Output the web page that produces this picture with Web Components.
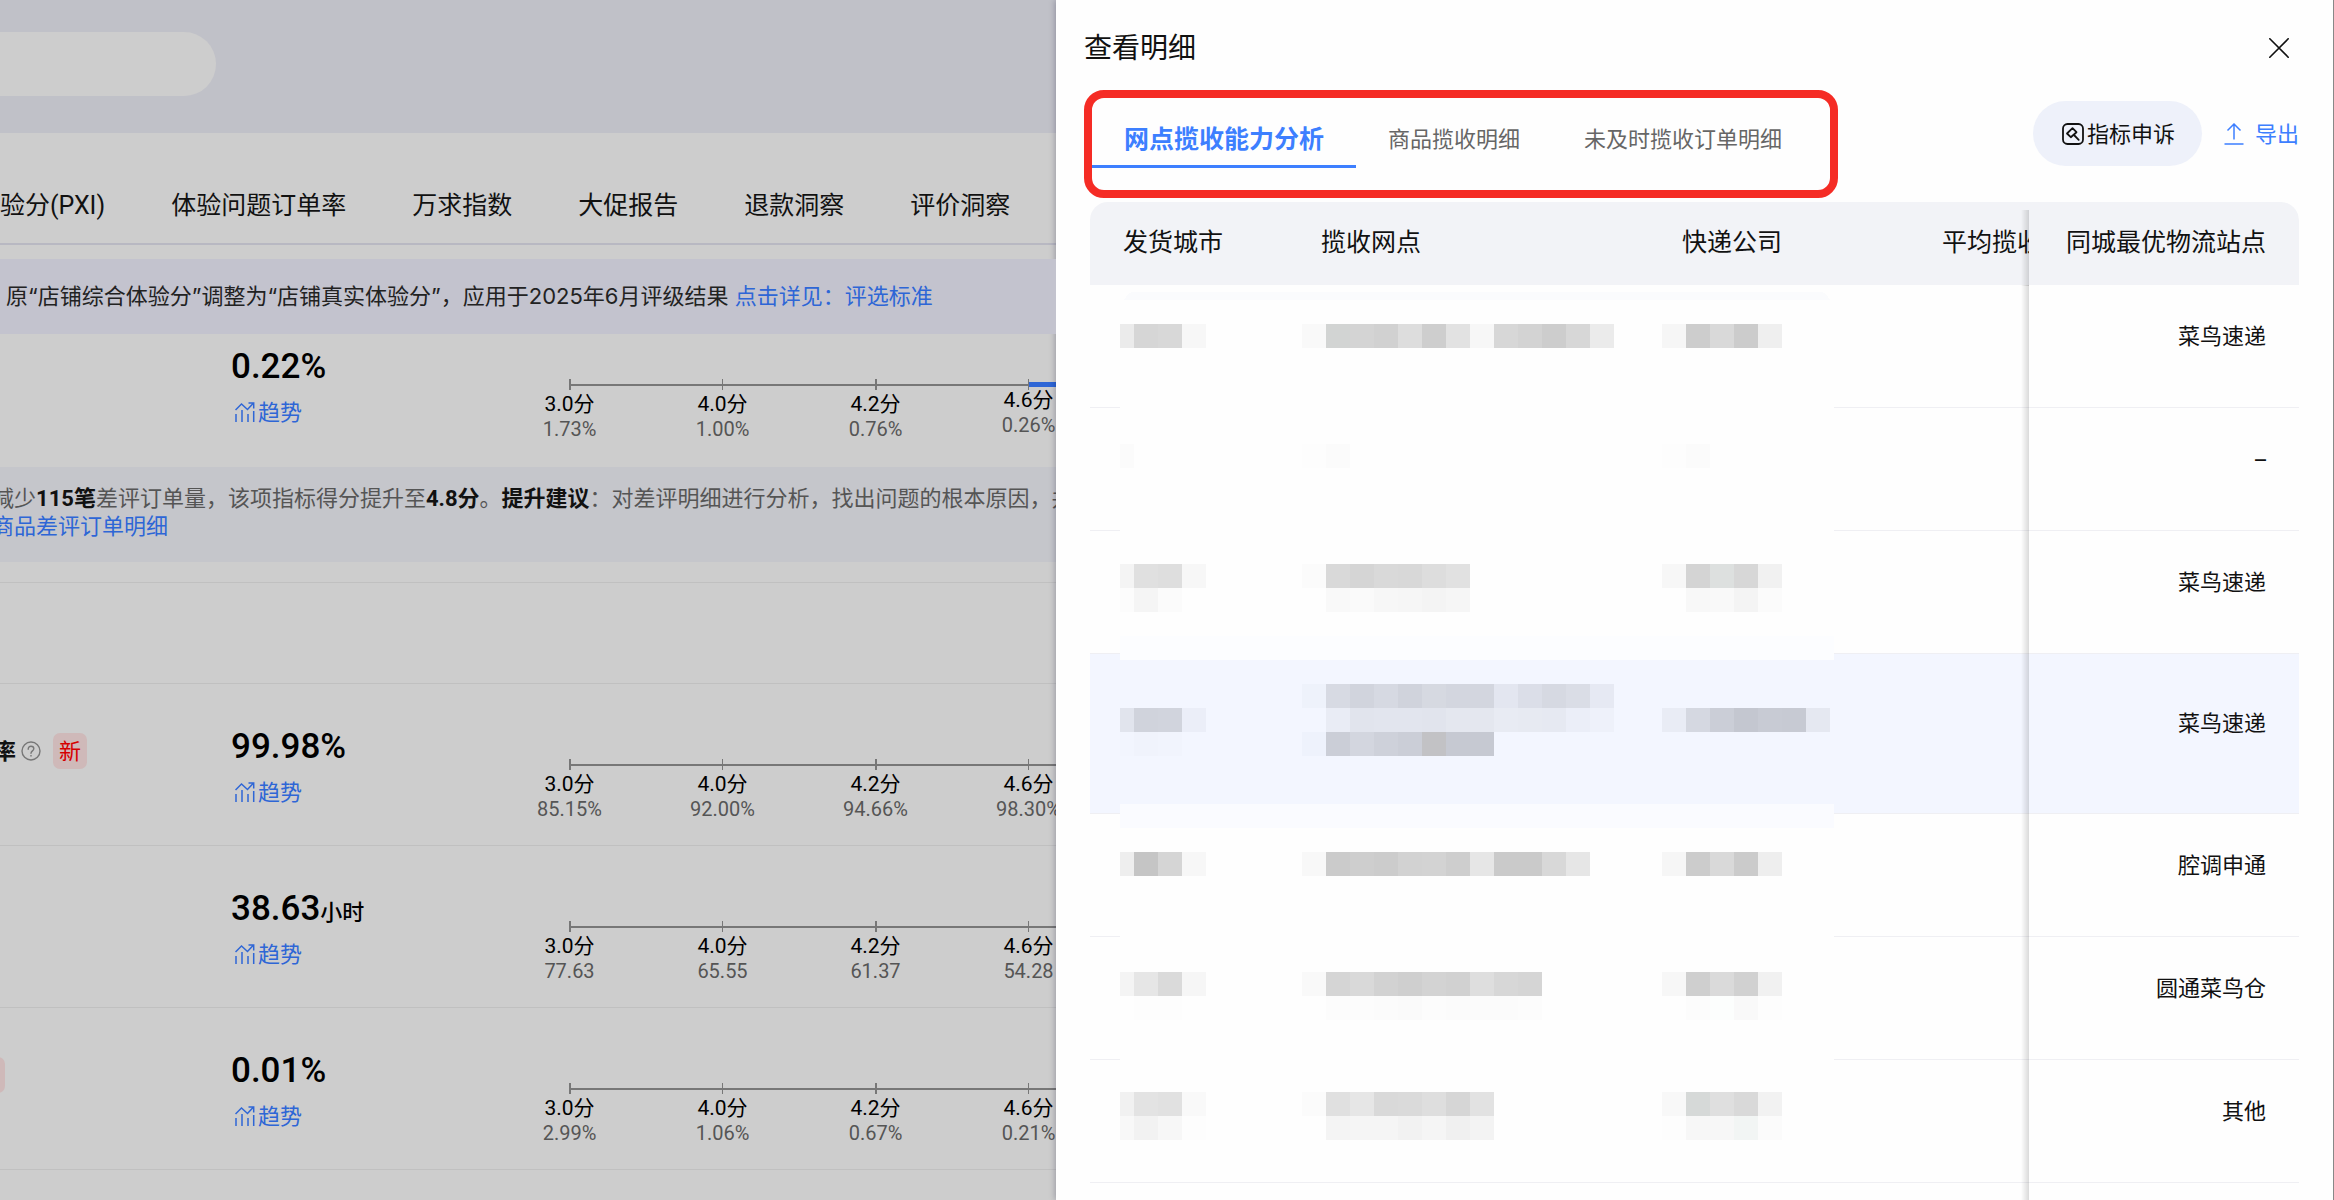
<!DOCTYPE html>
<html lang="zh-CN">
<head>
<meta charset="utf-8">
<title>查看明细</title>
<style>
  html, body {
    height: 100%;
    margin: 0;
  }
  body {
    font-family: Inter, "Noto Sans CJK SC", sans-serif;
    font-size: 22px;
    line-height: 30px;
    color: #111;
    background: #cdcdcd;
    overflow: hidden;
  }
</style>
</head>
<body>
<app-shell>
  <experience-page></experience-page>
  <detail-drawer slot="drawer" heading="查看明细">
    <drawer-tabs slot="tabs"></drawer-tabs>
    <drawer-actions slot="actions"></drawer-actions>
    <carrier-table></carrier-table>
  </detail-drawer>
</app-shell>

<script>
(function() {
  // Base class - clones the static template of the subclass into the shadow root
  class BaseElement extends HTMLElement {
    constructor() {
      super()
      const template = document.createElement('template')
      template.innerHTML = this.constructor.markup
      this._root = this.attachShadow({ mode: 'open' })
      this._root.appendChild(template.content.cloneNode(true))
    }
  }

  // ---------
  // Page on the left, drawer on the right
  class AppShell extends BaseElement {
    static get markup() {
      return `
        <style>
          :host {
            display: grid;
            grid-template-columns: minmax(0, 1056fr) minmax(0, 1278fr);
            grid-template-rows: minmax(0, 1fr);
            height: 100vh;
            overflow: hidden;
          }
          main { min-width: 0; overflow: hidden; }
        </style>
        <main><slot></slot></main>
        <slot name="drawer"></slot>
      `
    }
  }

  // ---------
  // The dimmed page behind the drawer
  class ExperiencePage extends BaseElement {
    static get markup() {
      return `
        <style>
          :host { display: block; background: #cdcdcd; }
          header {
            display: flex;
            padding: 32px 0 37px;
            background: #c0c1c8;
          }
          input {
            width: 248px;
            height: 64px;
            margin: 0 0 0 -32px;
            box-sizing: border-box;
            border: 0;
            border-radius: 32px;
            background: #cdcdcd;
          }
          nav {
            display: flex;
            gap: 66px;
            padding: 56px 0 20px;
            border-bottom: 2px solid #b8b8c2;
            font: 25px/34px Roboto, "Noto Sans CJK SC", sans-serif;
            white-space: nowrap;
          }
          nav a { color: #111; text-decoration: none; }
          .notice {
            position: relative;
            z-index: 1;
            margin-top: 14px;
            padding: 22px 0 23px 6px;
            background: #c3c3ce;
            color: #222;
            white-space: nowrap;
          }
          .link { color: #2e66d6; text-decoration: none; }
          .list { margin-top: -30px; }
          .tip {
            padding: 18px 0 21px;
            background: #c5c6cb;
            color: #555;
            font: 22px/28px Roboto, "Noto Sans CJK SC", sans-serif;
            white-space: nowrap;
          }
          .tip p { margin: 0 0 0 -8px; }
          .tip b { color: #111; }
          .group {
            height: 100px;
            margin-top: 20px;
            border: solid #c0c0c0;
            border-width: 1px 0;
          }
        </style>
        <header><input type="text" aria-label="搜索"></header>
        <nav>
          <a href="#pxi">验分(PXI)</a>
          <a href="#orders">体验问题订单率</a>
          <a href="#wanqiu">万求指数</a>
          <a href="#promo">大促报告</a>
          <a href="#refund">退款洞察</a>
          <a href="#review">评价洞察</a>
        </nav>
        <div class="notice">原“店铺综合体验分”调整为“店铺真实体验分”，应用于2025年6月评级结果 <a class="link" href="#rules">点击详见：评选标准</a></div>
        <div class="list">
          <metric-row value="0.22%" active="3" scores="1.73%,1.00%,0.76%,0.26%"></metric-row>
          <div class="tip">
            <p>减少<b>115笔</b>差评订单量，该项指标得分提升至<b>4.8分</b>。<b>提升建议</b>：对差评明细进行分析，找出问题的根本原因，并制</p>
            <p><a class="link" href="#bad">商品差评订单明细</a></p>
          </div>
          <div class="group"></div>
          <metric-row value="99.98%" scores="85.15%,92.00%,94.66%,98.30%">
            <metric-name slot="name">率</metric-name>
          </metric-row>
          <metric-row value="38.63" unit="小时" scores="77.63,65.55,61.37,54.28"></metric-row>
          <metric-row value="0.01%" scores="2.99%,1.06%,0.67%,0.21%">
            <new-tag slot="name" class="edge"></new-tag>
          </metric-row>
        </div>
      `
    }
  }

  // ---------
  class NewTag extends BaseElement {
    static get markup() {
      return `
        <style>
          :host {
            display: inline-block;
            padding: 3px 6px;
            border-radius: 7px;
            background: #cfb9b9;
            color: #d60000;
          }
          /* the tag is scrolled out, only its right edge stays */
          :host(.edge) { margin-left: -29px; }
        </style>
        <span>新</span>
      `
    }
    connectedCallback() {
      if (this.classList.contains('edge')) {
        this._root.querySelector('span').style.visibility = 'hidden'
      }
    }
  }

  class MetricName extends BaseElement {
    static get markup() {
      return `
        <style>
          :host { display: flex; align-items: center; margin-left: -6px; font-weight: 700; }
          svg { margin: 0 12px 0 5px; }
          new-tag { font-weight: 400; }
        </style>
        <slot></slot>
        <svg width="20" height="20" viewBox="0 0 20 20" fill="none" stroke="#777" stroke-width="1.4">
          <circle cx="10" cy="10" r="9"/>
          <path d="M7.2 8.2C7.2 6.4 8.4 5.3 10 5.3s2.8 1 2.8 2.5c0 2-2.8 2.2-2.8 4.4" stroke-linecap="round"/>
          <path d="M10 14v1.5"/>
        </svg>
        <new-tag></new-tag>
      `
    }
  }

  // ---------
  // One metric: name, current value with the trend link, score axis
  class MetricRow extends BaseElement {
    static get markup() {
      return `
        <style>
          :host {
            display: grid;
            grid-template-columns: 231px 262px 1fr;
            height: 162px;
            border-bottom: 1px solid #c0c0c0;
            box-sizing: border-box;
          }
          .name { padding-top: 49px; }
          .current { padding-top: 40px; }
          .value {
            font: 500 35px/46px Roboto, "Noto Sans CJK SC", sans-serif;
            color: #000;
          }
          .value small { font-size: 22px; line-height: 0; }
          a {
            display: inline-flex;
            align-items: center;
            gap: 3px;
            margin: 7px 0 0 4px;
            color: #2e66d6;
            text-decoration: none;
          }
          score-axis { margin-top: 75px; }
          :host([active]) { height: 163px; border-bottom: 0; }
        </style>
        <div class="name"><slot name="name"></slot></div>
        <div class="current">
          <div class="value"></div>
          <a href="#trend">
            <svg width="20" height="22" viewBox="0 0 20 22" fill="none" stroke="currentColor" stroke-width="1.5">
              <path d="M.5 9 6.5 3l6 5.500L18.500 2M13.500 2h5.200v5.500"/>
              <path d="M1 13v8M7 9v12M13 13v8M18.700 10v11"/>
            </svg>趋势</a>
        </div>
        <score-axis></score-axis>
      `
    }
    connectedCallback() {
      const value = this._root.querySelector('.value')
      value.textContent = this.getAttribute('value')
      if (this.hasAttribute('unit')) {
        const unit = document.createElement('small')
        unit.textContent = this.getAttribute('unit')
        value.appendChild(unit)
      }
      this._root.querySelector('score-axis').render(
        this.getAttribute('scores').split(','),
        Number(this.getAttribute('active') || -1)
      )
    }
  }

  class ScoreAxis extends BaseElement {
    static get markup() {
      return `
        <style>
          :host {
            display: grid;
            grid-template-columns: repeat(4, 153px);
            align-items: start;
            font: 20px/25px Roboto, "Noto Sans CJK SC", sans-serif;
            text-align: center;
            color: #555;
          }
          .rail { display: flex; align-items: center; height: 11px; margin-bottom: 2px; }
          .rail i { flex: 1; height: 2px; background: #777; }
          .rail b { width: 2px; height: 11px; background: #777; }
          .point:nth-of-type(even) .rail b { width: 1px; }
          .point:first-of-type .rail i:first-child { background: none; }
          .active .rail { margin-bottom: -2px; }
          .active .rail i:last-child { height: 5px; background: #2e66d6; }
          .grade { color: #000; font-size: 21px; }
        </style>
      `
    }
    render(scores, active) {
      const grades = ['3.0分', '4.0分', '4.2分', '4.6分']
      scores.forEach((score, i) => {
        const point = document.createElement('div')
        point.className = i === active ? 'point active' : 'point'
        point.innerHTML = `
          <div class="rail"><i></i><b></b><i></i></div>
          <div class="grade">${grades[i]}</div>
          <div>${score}</div>
        `
        this._root.appendChild(point)
      })
    }
  }

  // ---------
  class DetailDrawer extends BaseElement {
    static get markup() {
      return `
        <style>
          :host {
            position: relative; /* stays above the page so its shadow shows */
            box-sizing: border-box;
            overflow: hidden;
            padding: 28px 34px 0 28px;
            border-right: 1px solid #888;
            background: #fefefe;
            box-shadow: -1px 0 6px rgba(0, 0, 40, .25);
          }
          header, .bar { display: flex; justify-content: space-between; }
          header { align-items: center; padding-right: 10px; }
          h1 { margin: 0; font-size: 28px; line-height: 40px; font-weight: 400; }
          button { display: flex; padding: 0; border: 0; background: none; color: #111; }
          .bar { margin: 22px 0 4px; align-items: flex-start; }
          ::slotted(carrier-table) { margin-left: 6px; }
        </style>
        <header>
          <h1></h1>
          <button type="button" aria-label="关闭">
            <svg width="20" height="20" viewBox="0 0 20 20" stroke="currentColor" stroke-width="1.6" stroke-linecap="round">
              <path d="M.8.8l18.400 18.400M19.200.8.8 19.200"/>
            </svg>
          </button>
        </header>
        <div class="bar">
          <slot name="tabs"></slot>
          <slot name="actions"></slot>
        </div>
        <slot></slot>
      `
    }
    connectedCallback() {
      this._root.querySelector('h1').textContent = this.getAttribute('heading')
    }
  }

  class DrawerTabs extends BaseElement {
    static get markup() {
      return `
        <style>
          :host {
            display: flex;
            padding: 0 16px 22px 0;
            border: 8px solid #f52c25;
            border-radius: 20px;
          }
          button {
            padding: 26px 32px 11px;
            border: 0;
            border-bottom: 3px solid transparent;
            background: none;
            font: inherit;
            color: #666;
            white-space: nowrap;
          }
          button[aria-selected="true"] {
            border-color: #3d7fff;
            color: #3d7fff;
            font-size: 25px;
            font-weight: 600;
          }
        </style>
        <button type="button" role="tab" aria-selected="true">网点揽收能力分析</button>
        <button type="button" role="tab" aria-selected="false">商品揽收明细</button>
        <button type="button" role="tab" aria-selected="false">未及时揽收订单明细</button>
      `
    }
  }

  class DrawerActions extends BaseElement {
    static get markup() {
      return `
        <style>
          :host { display: flex; align-items: center; gap: 22px; margin-top: 11px; }
          button {
            display: flex;
            align-items: center;
            padding: 0;
            border: 0;
            background: none;
            font: inherit;
            color: #111;
            white-space: nowrap;
          }
          .appeal {
            gap: 3px;
            height: 65px;
            padding: 0 27px 0 29px;
            border-radius: 33px;
            background: #eef1fa;
          }
          .export { gap: 11px; color: #3d7fff; }
        </style>
        <button type="button" class="appeal">
          <svg width="22" height="22" viewBox="0 0 22 22" fill="none" stroke="currentColor" stroke-width="1.8" stroke-linejoin="round" stroke-linecap="round">
            <rect x="1" y="1" width="20" height="20" rx="4.500"/>
            <path d="M10.500 5.200 14.500 9.200 8.800 14.200 5 10.500Z"/>
            <path d="M12 12l4.700 4.800"/>
          </svg>指标申诉</button>
        <button type="button" class="export">
          <svg width="20" height="22" viewBox="0 0 20 22" fill="none" stroke="currentColor" stroke-width="1.5">
            <path d="M10 16.500V1.200M3.500 7.500 10 1l6.500 6.500M.500 21h19"/>
          </svg>导出</button>
      `
    }
  }

  // ---------
  // Table with a pinned last column; the first columns are masked
  class CarrierTable extends BaseElement {
    static get markup() {
      return `
        <style>
          :host {
            display: block;
            position: relative;
            overflow: hidden;
            border-radius: 18px 18px 0 0;
          }
          table {
            width: 110%;
            min-width: 1338px;
            table-layout: fixed;
            border-collapse: separate;
            border-spacing: 0;
          }
          th {
            padding: 23px 33px 26px;
            background: #f2f3f7;
            font-size: 25px;
            line-height: 34px;
            font-weight: 400;
            text-align: left;
            white-space: nowrap;
          }
          td {
            padding: 36px 33px 56px;
            border-bottom: 1px solid #efeff3;
            background: #fefefe;
          }
          .city { width: 132px; }
          .branch { width: 295px; }
          .company { width: 194px; }
          .best { width: 204px; }
          th:last-child, td:last-child {
            position: sticky;
            right: 0;
            z-index: 2;
            text-align: right;
          }
          th:last-child { border-radius: 14px 18px 0 0; }
          th:last-child::before, td:last-child::before {
            content: "";
            position: absolute;
            top: 0;
            bottom: -1px;
            right: 100%;
            width: 8px;
            background: linear-gradient(to left, rgba(0, 0, 0, .14), rgba(0, 0, 0, 0));
          }
          th:last-child::before { top: 8px; }
          .hover td { background: #f3f6ff; padding: 54px 33px 75px; }
          .next td { height: 30px; }
          pixel-mask { position: absolute; left: 30px; top: 90px; }
        </style>
        <table>
          <thead>
            <tr>
              <th class="city">发货城市</th>
              <th class="branch">揽收网点</th>
              <th class="company">快递公司</th>
              <th>平均揽收</th>
              <th class="best">同城最优物流站点</th>
            </tr>
          </thead>
          <tbody></tbody>
        </table>
        <pixel-mask></pixel-mask>
      `
    }
    connectedCallback() {
      // the last row is only just scrolled into view
      const stations = ['菜鸟速递', '–', '菜鸟速递', '菜鸟速递', '腔调申通', '圆通菜鸟仓', '其他', '']
      const classes = { 3: 'hover', 7: 'next' }
      this._root.querySelector('tbody').innerHTML = stations.map((name, i) => `
        <tr class="${classes[i] || ''}"><td></td><td></td><td></td><td></td><td>${name}</td></tr>
      `).join('')
    }
  }

  // Mosaic drawn over private data. Each band is [y, [column, shades...], ...],
  // column 0 is 14px wide, all the others are 24px
  class PixelMask extends BaseElement {
    static get markup() {
      return `
        <style>
          :host { display: block; line-height: 0; }
        </style>
        <svg width="714" height="848" viewBox="0 0 714 848" shape-rendering="crispEdges">
          <rect width="714" height="848" rx="14" fill="#fefefe"/>
          <path d="M4 8Q8 0 14 0H700Q706 0 710 8Z" fill="#fafbfd"/>
          <path d="M0 344H714V368H0Z" fill="#fcfdff"/>
          <path d="M0 368H714V512H0Z" fill="#f3f6ff"/>
          <path d="M0 512H714V536H0Z" fill="#fafbff"/>
          <g></g>
        </svg>
      `
    }
    connectedCallback() {
      const bands = [
        [32, [0, 'ebebeb', 'd6d6d6', 'd8d8d8', 'f7f7f7'],
          [8, 'f9f9f9', 'd2d4d3', 'd4d4d4', 'd1d1d1', 'dddddd', 'cecece', 'e2e2e2', 'f7f7f7', 'd7d7d7', 'd3d3d3', 'cdcdcd', 'd7d7d7', 'ebebeb'],
          [23, 'f6f6f6', 'cdcdcd', 'd9d9d9', 'cccccc', 'efefef']],
        [152, [0, 'fbfbfb'], [8, 'fdfdfd', 'fbfbfb'], [23, 'fdfdfd', 'fbfbfb']],
        [272, [0, 'f4f4f4', 'e0e0e0', 'dedede', 'f7f7f7'],
          [8, 'fbfbfb', 'd9d9d9', 'd5d5d5', 'd9d9d9', 'd8d8d8', 'dddddd', 'e1e1e1'],
          [23, 'f7f7f7', 'd4d4d4', 'dde0df', 'd7d7d7', 'f1f1f1']],
        [296, [0, 'fcfcfc', 'f5f5f5', 'fbfbfb'],
          [9, 'f9f9f9', 'fafafa', 'f7f7f7', 'f6f6f6', 'f4f4f4', 'f6f6f6'],
          [24, 'f8f8f8', 'f9f9f9', 'f4f4f4', 'fbfbfb']],
        [392, [8, 'eef2fb', 'd7dae3', 'd1d4dd', 'd6d9e2', 'd0d3dc', 'd6d9e1', 'd3d6df', 'd3d6df', 'e3e6f0', 'dbdee8', 'd6d9e2', 'dadde6', 'e6e9f3']],
        [416, [0, 'e1e4ed', 'd0d3dc', 'd1d4dd', 'ebeef8'],
          [9, 'e9ecf5', 'e1e4ed', 'e2e5ee', 'e2e5ee', 'e1e4ed', 'e4e7ef', 'e4e7ef', 'e8ebf3', 'e7eaf2', 'e6e9f2', 'ebeef8', 'eef1fa'],
          [23, 'e9ecf5', 'd5d8e1', 'cbced7', 'c4c7d0', 'c8cbd4', 'c7cad3', 'e5e8f1']],
        [440, [0, 'f2f5fe', 'f0f3fc', 'f1f4fd'],
          [8, 'eef2fc', 'cbced7', 'd3d6df', 'ced1da', 'cbced7', 'c2c2c5', 'c6c9d2', 'c6c9d2']],
        [560, [0, 'eeeeee', 'c5c5c5', 'd5d5d5', 'f7f7f7'],
          [8, 'f8f8f8', 'cbcbcb', 'cecece', 'cccccc', 'd2d2d2', 'd3d3d3', 'cecece', 'e6e6e6', 'cacaca', 'cacaca', 'd8d8d8', 'e6e6e6'],
          [23, 'f6f6f6', 'cccccc', 'd9d9d9', 'cbcbcb', 'eeeeee']],
        [680, [0, 'f4f4f4', 'e6e6e6', 'dadada', 'f6f6f6'],
          [8, 'f9f9f9', 'd5d5d5', 'd9d9d9', 'd2d2d2', 'cfcfcf', 'd3d3d3', 'd1d1d1', 'dedede', 'd7d7d7', 'd5d5d5'],
          [23, 'f7f7f7', 'cfcfcf', 'dadada', 'd1d1d1', 'f1f1f1']],
        [704, [1, 'fdfdfd', 'fdfdfd'],
          [9, 'fcfcfc', 'fcfcfc', 'fbfbfb', 'fafafa', 'fcfcfc', 'fbfbfb', 'fbfbfb', 'fbfbfb', 'fcfcfc'],
          [24, 'fcfcfc', 'fcfefd', 'f9f9f9', 'fdfdfd']],
        [800, [0, 'f1f1f1', 'e3e3e3', 'e1e1e1', 'f9f9f9'],
          [8, 'fbfbfb', 'e0e0e0', 'e6e6e6', 'd9d9d9', 'dadada', 'dedede', 'd6d6d6', 'e2e2e2'],
          [23, 'f8f8f8', 'd6d9d8', 'dfdfdf', 'd9d9d9', 'f2f2f2']],
        [824, [0, 'f8f8f8', 'f2f2f2', 'f7f7f7', 'fdfdfd'],
          [9, 'f4f4f4', 'f5f5f5', 'f5f5f5', 'f2f2f2', 'f5f5f5', 'f0f0f0', 'f3f3f3'],
          [23, 'fdfdfd', 'f7f7f7', 'f7f7f7', 'f2f5f4', 'fbfbfb']]
      ]
      let cells = ''
      bands.forEach(([y, ...runs]) => {
        runs.forEach(([start, ...shades]) => {
          shades.forEach((shade, i) => {
            const col = start + i
            const x = col === 0 ? 0 : 14 + (col - 1) * 24
            const w = col === 0 ? 14 : 24
            cells += `<rect x="${x}" y="${y}" width="${w}" height="24" fill="#${shade}"/>`
          })
        })
      })
      this._root.querySelector('g').innerHTML = cells
    }
  }

  // ---
  // Children first, so that they are ready when a parent renders
  customElements.define('new-tag', NewTag)
  customElements.define('metric-name', MetricName)
  customElements.define('score-axis', ScoreAxis)
  customElements.define('metric-row', MetricRow)
  customElements.define('experience-page', ExperiencePage)
  customElements.define('pixel-mask', PixelMask)
  customElements.define('carrier-table', CarrierTable)
  customElements.define('drawer-tabs', DrawerTabs)
  customElements.define('drawer-actions', DrawerActions)
  customElements.define('detail-drawer', DetailDrawer)
  customElements.define('app-shell', AppShell)
})()
</script>
</body>
</html>
